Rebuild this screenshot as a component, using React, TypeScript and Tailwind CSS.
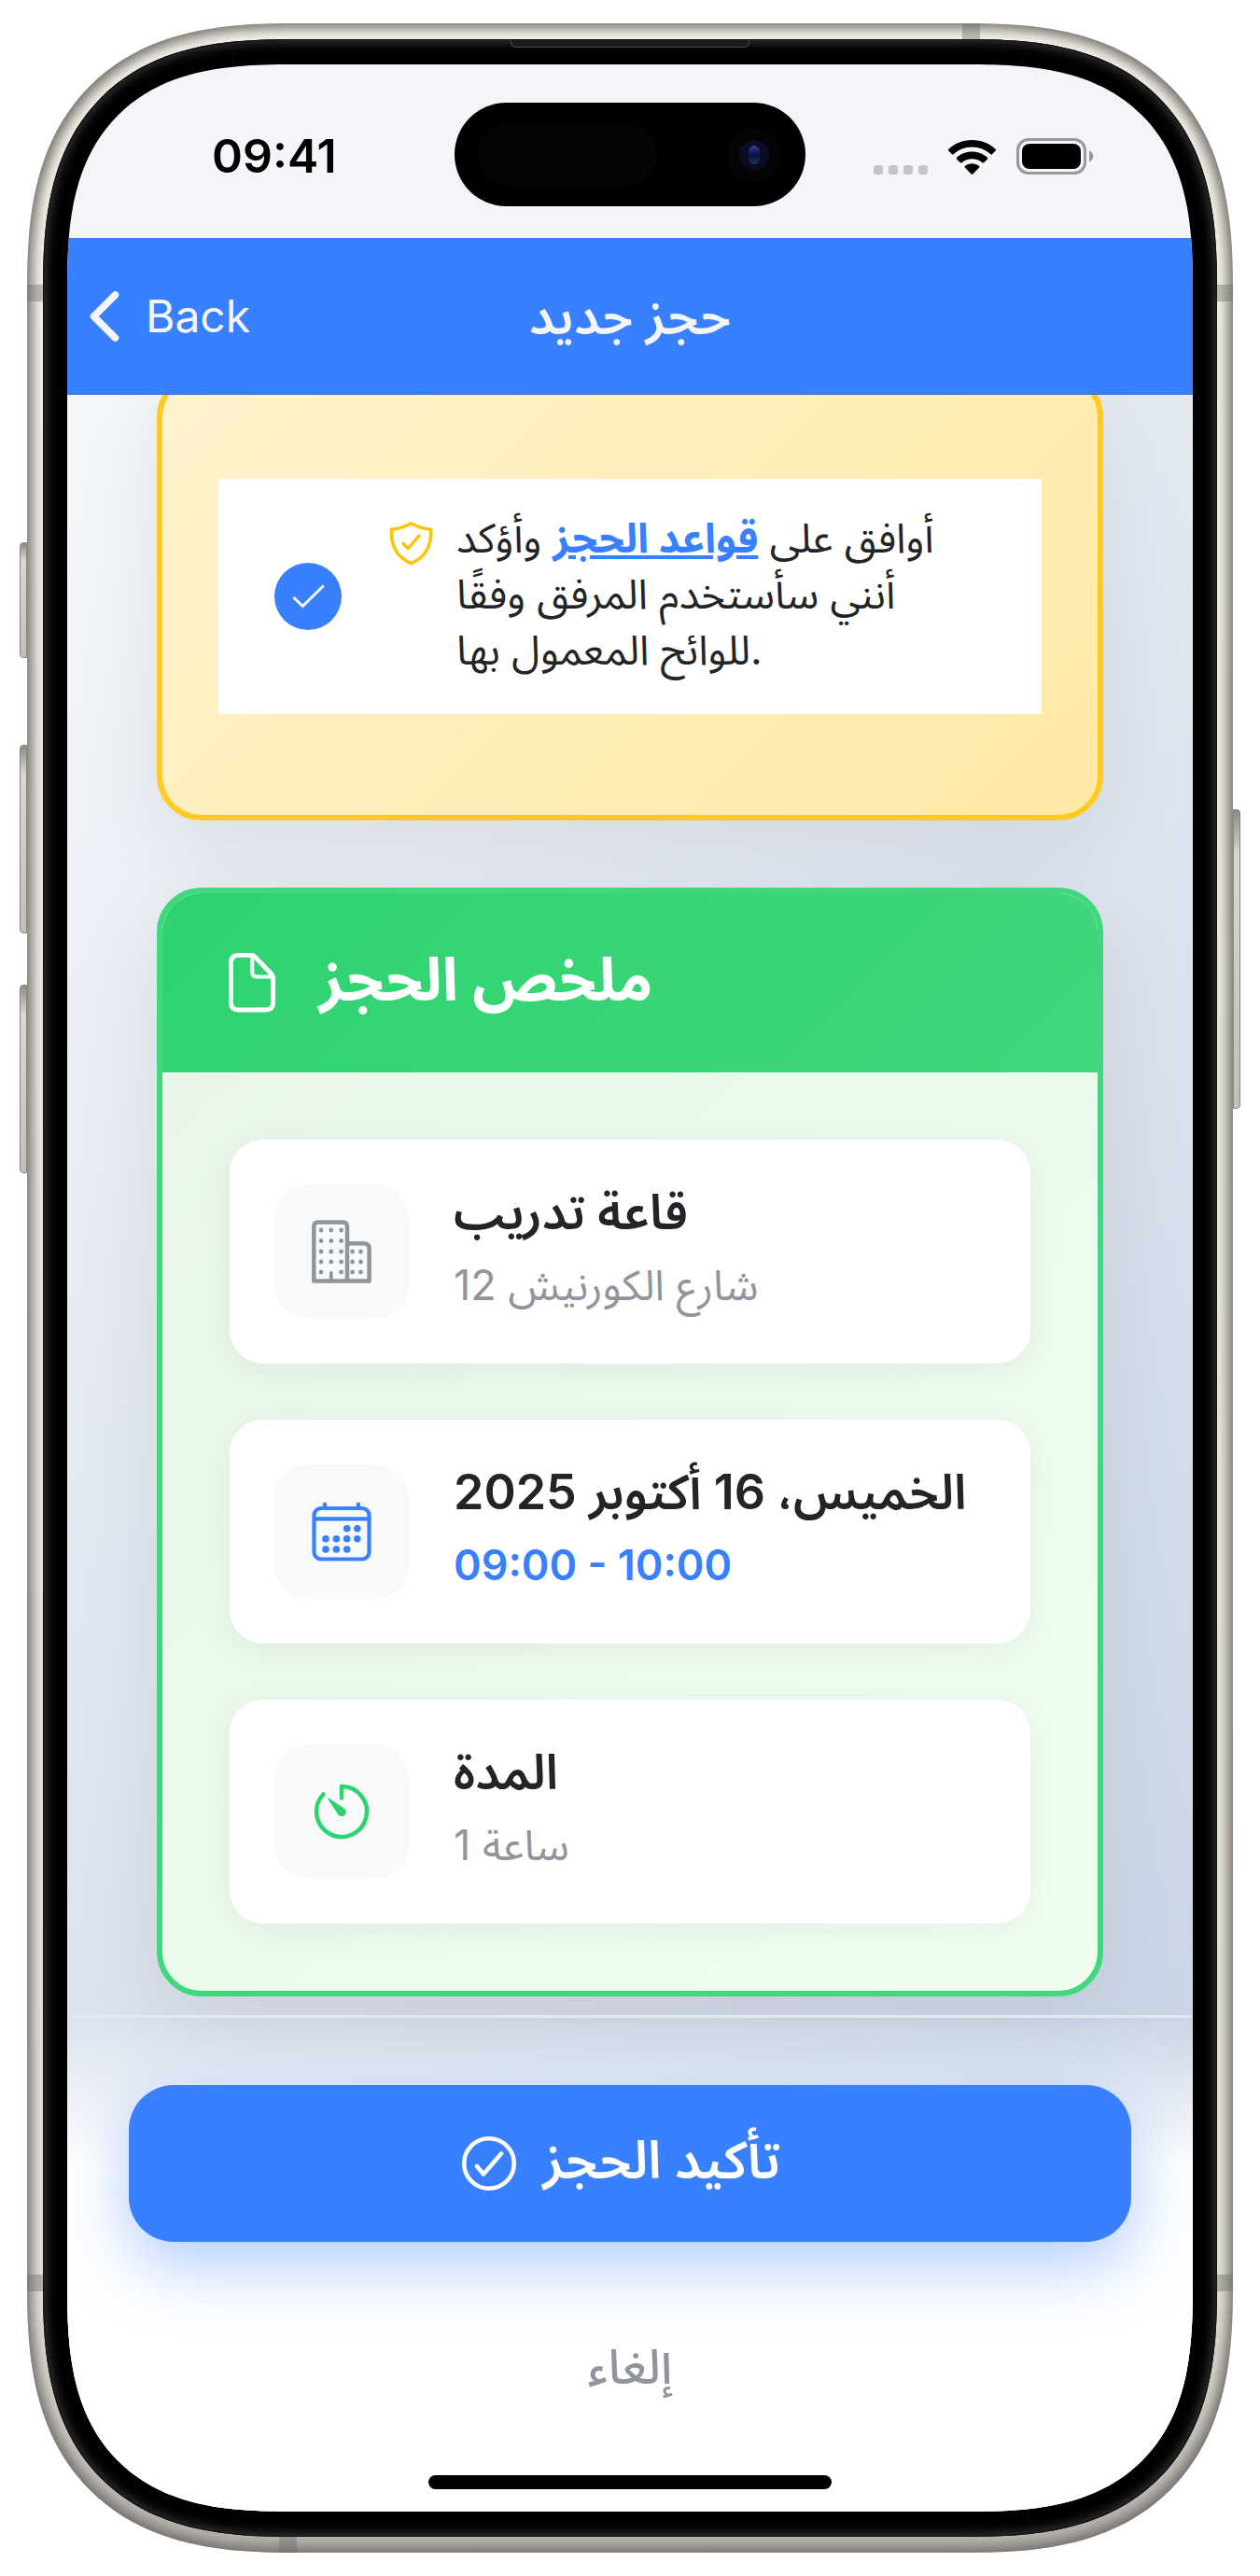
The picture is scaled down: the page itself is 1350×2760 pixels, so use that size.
import type { ReactNode } from "react";

function SignalIcon() {
  return (
    <svg viewBox="0 0 58 10" className="h-[10px] w-[58px] fill-[#c4c5c8]" aria-hidden="true">
      <rect x="0" width="10" height="10" rx="3" />
      <rect x="16" width="10" height="10" rx="3" />
      <rect x="32" width="10" height="10" rx="3" />
      <rect x="48" width="10" height="10" rx="3" />
    </svg>
  );
}

function WifiIcon() {
  return (
    <svg viewBox="0 0 51 37" className="h-[37px] w-[51px]" aria-hidden="true">
      <path d="M25.500 0C35.500 0 44.500 3.900 50.600 9.800C51.100 10.300 51.100 10.900 50.700 11.400L46.900 15.200C46.400 15.700 45.800 15.700 45.300 15.200C40.200 10.400 33.200 7.500 25.500 7.500C17.800 7.500 10.800 10.400 5.700 15.200C5.200 15.700 4.600 15.700 4.100 15.200L.3 11.400C-.1 10.900-.1 10.300.4 9.800C6.500 3.900 15.500 0 25.500 0Z" />
      <path d="M25.500 12.600C32 12.600 37.700 15 41.900 18.800C42.400 19.300 42.400 19.900 42 20.400L38.100 24.200C37.600 24.700 37 24.700 36.500 24.200C33.500 21.700 29.700 20.200 25.500 20.200C21.300 20.200 17.500 21.700 14.500 24.200C14 24.700 13.400 24.700 12.900 24.200L9 20.400C8.600 19.900 8.600 19.300 9.100 18.800C13.300 15 19 12.600 25.500 12.600Z" />
      <path d="M25.500 25.300C28.300 25.300 30.900 26.300 33 27.800C33.500 28.200 33.600 28.900 33.100 29.400L26.400 36.400C25.900 36.900 25.100 36.900 24.600 36.400L17.900 29.400C17.400 28.900 17.500 28.200 18 27.800C20.100 26.300 22.700 25.300 25.500 25.300Z" />
    </svg>
  );
}

function BatteryIcon() {
  return (
    <svg viewBox="0 0 83 39" className="h-[39px] w-[83px]" aria-hidden="true">
      <rect x="1.500" y="1.500" width="72" height="36" rx="11.500" fill="none" stroke="#97989b" strokeWidth="3" />
      <rect x="6" y="6" width="63" height="27" rx="8" />
      <path d="M78 13.500C80.600 14.500 82.200 16.800 82.200 19.500S80.600 24.500 78 25.500Z" fill="#97989b" />
    </svg>
  );
}

function ChevronIcon() {
  return (
    <svg viewBox="0 0 32 54" className="h-[54px] w-8" fill="none" stroke="currentColor" strokeWidth="7.500" strokeLinecap="round" strokeLinejoin="round" aria-hidden="true">
      <path d="M27.500 4L4.500 27L27.500 50" />
    </svg>
  );
}

function ShieldIcon() {
  return (
    <svg viewBox="0 0 48 48" className="size-12 shrink-0 text-[#ffc409]" fill="none" stroke="currentColor" strokeWidth="3.500" strokeLinecap="round" strokeLinejoin="round" aria-hidden="true">
      <path d="M23.500 2.700C17.500 6 9.500 8.500 2.300 9.300C1.800 27 7.500 38.500 23.500 45.800C39.500 38.500 45.200 27 44.700 9.300C37.500 8.500 29.500 6 23.500 2.700Z" />
      <path d="M15 24.300L20.300 29.700L32 16.200" />
    </svg>
  );
}

function DocIcon() {
  return (
    <svg viewBox="0 0 72 72" className="size-[72px]" fill="none" stroke="currentColor" strokeWidth="4.800" strokeLinejoin="round" aria-hidden="true">
      <path d="M13.400 14.500Q13.400 6.500 21.400 6.500H35Q37.500 6.500 39.200 8.200L56.800 26.500Q58.600 28.400 58.600 31V57Q58.600 65 50.600 65H21.400Q13.400 65 13.400 57Z" />
      <path d="M36.300 7V25Q36.300 29.500 40.800 29.500H58" strokeWidth="4" />
    </svg>
  );
}

function BuildingIcon() {
  const rows = [13, 24.5, 36, 47, 58];
  return (
    <svg viewBox="0 0 72 72" className="size-[72px] text-[#92949c]" fill="none" stroke="currentColor" strokeWidth="4.500" aria-hidden="true">
      <path d="M42 67.600V9.500Q42 4.500 37 4.500H11.300Q6.300 4.500 6.300 9.500V67.600H65.600V33Q65.600 27.200 59.800 27.200H42" strokeLinejoin="round" />
      <path d="M24.800 59V68" strokeWidth="3.800" strokeLinecap="round" />
      <g fill="currentColor" stroke="none">
        {rows.map((y) => (
          <g key={y}>
            <circle cx="14" cy={y} r="2.400" />
            {y < 58 && <circle cx="24.800" cy={y} r="2.400" />}
            <circle cx="35.600" cy={y} r="2.400" />
            {y > 30 && <circle cx="47.600" cy={y} r="2.400" />}
            {y > 30 && <circle cx="56.500" cy={y} r="2.400" />}
          </g>
        ))}
      </g>
    </svg>
  );
}

function CalendarIcon() {
  const dots = [
    [41.7, 32.7], [52.8, 32.7],
    [19, 43.8], [30.4, 43.8], [41.7, 43.8], [52.8, 43.8],
    [19, 55], [30.4, 55], [41.7, 55],
  ];
  return (
    <svg viewBox="0 0 72 72" className="size-[72px] text-[#3880ff]" fill="none" stroke="currentColor" strokeWidth="4.200" strokeLinecap="round" aria-hidden="true">
      <rect x="6.500" y="11" width="59" height="54.500" rx="7.500" />
      <path d="M7 22.400H65M18 6.500V10M54 6.500V10" />
      {dots.map(([x, y]) => (
        <circle key={`${x}-${y}`} cx={x} cy={y} r="3.800" fill="currentColor" stroke="none" />
      ))}
    </svg>
  );
}

function TimerIcon() {
  return (
    <svg viewBox="0 0 72 72" className="size-[72px] text-[#2dd36f]" fill="none" stroke="currentColor" strokeWidth="4.500" strokeLinecap="round" strokeLinejoin="round" aria-hidden="true">
      <path d="M36 21.500V9A27 27 0 1 1 16.400 17.500" />
      <path d="M22.400 21.400L38.700 32.400A4.700 4.700 0 1 1 32.200 38.900L21.400 22.700Q21.300 21.100 22.400 21.400Z" fill="currentColor" stroke="none" />
    </svg>
  );
}

function CheckCircleIcon() {
  return (
    <svg viewBox="0 0 60 60" className="size-[60px]" fill="none" stroke="currentColor" strokeWidth="4.500" strokeLinecap="round" strokeLinejoin="round" aria-hidden="true">
      <circle cx="30" cy="30" r="26.800" />
      <path d="M17 33L24 41.500L43 19.500" />
    </svg>
  );
}

function SummaryRow({ icon, title, children }: { icon: ReactNode; title: string; children: ReactNode }) {
  return (
    <li className="flex items-center gap-12 rounded-[36px] bg-white p-12 shadow-[0_6px_36px_rgba(0,0,0,0.06)]">
      <span className="grid size-36 shrink-0 place-items-center rounded-[36px] bg-[#f8f9fb]">{icon}</span>
      <div className="flex min-w-0 flex-col gap-3">
        <h3 className="text-[52px] leading-[60px] font-semibold text-[#222428]">{title}</h3>
        {children}
      </div>
    </li>
  );
}

const sideButton =
  "absolute w-2 border border-[#8b8783] bg-linear-to-b from-[#8f8c88] via-[#d9d7cf] via-15% to-[#c2bfb8]";
const band = "absolute bg-[#6b6966]/40";

export default function App() {
  return (
    <div className="min-h-screen bg-white px-[29px] py-[25px] font-['Inter','Noto_Sans_Arabic','DejaVu_Sans',sans-serif]">
      <div className="relative">
        <span className={`${sideButton} -left-2 top-[556px] h-[124px] rounded-l-sm`} />
        <span className={`${sideButton} -left-2 top-[773px] h-[202px] rounded-l-sm`} />
        <span className={`${sideButton} -left-2 top-[1030px] h-[202px] rounded-l-sm`} />
        <span className={`${sideButton} -right-2 top-[842px] h-[321px] rounded-r-sm`} />

        <div className="relative rounded-[284px] bg-linear-to-b from-[#f6f3e9] via-[#e6e3d9] via-90% to-[#b3b0aa] p-[17px] shadow-[inset_0_0_14px_5px_#6f6b69] [corner-shape:superellipse(1.36)]">
          <span className={`${band} left-0 top-[280px] h-[18px] w-[17px]`} />
          <span className={`${band} right-0 top-[280px] h-[18px] w-[17px]`} />
          <span className={`${band} bottom-[280px] left-0 h-[18px] w-[17px]`} />
          <span className={`${band} right-0 bottom-[280px] h-[18px] w-[17px]`} />
          <span className={`${band} top-0 right-[271px] h-[17px] w-[19px]`} />
          <span className={`${band} bottom-0 left-[270px] h-[17px] w-[19px]`} />

          <div className="relative rounded-[267px] bg-black px-[26px] py-[27px] shadow-[inset_0_0_0_1px_#111,inset_0_0_14px_1px_#4a4a4a] [corner-shape:superellipse(1.38)]">
            <span className="absolute top-px left-1/2 h-2 w-64 -translate-x-1/2 rounded-b-md border border-t-0 border-[#4a4a4a] bg-[#1b1b1b]" />

            <div className="relative flex flex-col overflow-hidden rounded-[240px] bg-[#f4f5f9] [corner-shape:superellipse(1.43)]">
              <div className="relative flex h-[186px] items-center justify-between pt-2.5 pr-[106px] pl-[155px]">
                <time className="text-[50px] leading-[60px] font-semibold text-black">09:41</time>
                <div className="absolute top-[41px] left-1/2 flex h-[111px] w-[376px] -translate-x-1/2 items-center justify-between rounded-full bg-black pr-[26px] pl-6">
                  <span className="h-[66px] w-[193px] rounded-full bg-[#040404]" />
                  <span className="grid size-[58px] place-items-center rounded-full bg-[#070408]">
                    <span className="grid size-8 place-items-center rounded-full bg-[#0b0c24]">
                      <span className="h-5 w-3 rounded-full bg-linear-to-b from-[#3a3f96] via-[#0c0d4a] to-[#1c3350]" />
                    </span>
                  </span>
                </div>
                <div className="flex items-end gap-[22px]">
                  <SignalIcon />
                  <WifiIcon />
                  <BatteryIcon />
                </div>
              </div>

              <header className="relative z-10 grid h-[168px] grid-cols-[1fr_auto_1fr] items-center border-b border-[#3470df] bg-[#3880ff] px-6 text-[#f4f5f9]">
                <button type="button" className="flex items-center gap-7 justify-self-start text-[48px] leading-[60px]">
                  <ChevronIcon />
                  Back
                </button>
                <h1 className="text-[54px] leading-[72px] font-semibold">حجز جديد</h1>
              </header>

              <div className="bg-linear-[135deg] from-[#f5f7fa] to-[#c3cfe2]">
                <main className="flex flex-col gap-[72px] px-24 pb-5">
                  <section className="-mt-6 rounded-[48px] border-[6px] border-[#ffca22] bg-linear-[135deg] from-[#fff3cd] to-[#ffe9a6] px-[60px] py-[108px] shadow-[0_24px_96px_rgba(0,0,0,0.08)]">
                    <label className="flex items-center gap-[51px] bg-white py-[33px] pr-9 pl-[60px]">
                      <span className="grid size-[72px] shrink-0">
                        <input type="checkbox" defaultChecked className="col-start-1 row-start-1 size-[72px] appearance-none rounded-full bg-[#3880ff]" />
                        <svg viewBox="0 0 72 72" className="pointer-events-none col-start-1 row-start-1 size-[72px]" fill="none" stroke="#fff" strokeWidth="2.800" aria-hidden="true">
                          <path d="M20.500 37L30.300 46.500L52.700 24.500" />
                        </svg>
                      </span>
                      <span className="flex items-start gap-6 pb-1.5">
                        <span className="pt-3">
                          <ShieldIcon />
                        </span>
                        <span className="max-w-[540px] text-[44px] leading-[60px] text-[#222428]">
                          أوافق على{" "}
                          <a href="#rules" className="font-bold text-[#3880ff] underline">
                            قواعد الحجز
                          </a>{" "}
                          وأؤكد أنني سأستخدم المرفق وفقًا للوائح المعمول بها.
                        </span>
                      </span>
                    </label>
                  </section>

                  <section className="overflow-hidden rounded-[48px] border-[6px] border-[#42d77d] bg-linear-[135deg] from-[#e8f5e8] to-[#f0fff0] shadow-[0_24px_96px_rgba(0,0,0,0.08)]">
                    <div className="flex h-48 items-center gap-9 bg-linear-[135deg] from-[#2dd36f] to-[#42d77d] px-[60px] text-white">
                      <DocIcon />
                      <h2 className="pb-2 text-[64px] leading-[84px] font-bold">ملخص الحجز</h2>
                    </div>
                    <ul className="flex flex-col gap-[60px] p-[72px]">
                      <SummaryRow icon={<BuildingIcon />} title="قاعة تدريب">
                        <p className="text-[45px] leading-[72px] text-[#92949c]">شارع الكورنيش 12</p>
                      </SummaryRow>
                      <SummaryRow icon={<CalendarIcon />} title="الخميس، 16 أكتوبر 2025">
                        <p className="text-[45px] leading-[72px] font-semibold text-[#3880ff]">09:00 - 10:00</p>
                      </SummaryRow>
                      <SummaryRow icon={<TimerIcon />} title="المدة">
                        <p className="text-[45px] leading-[72px] text-[#92949c]">1 ساعة</p>
                      </SummaryRow>
                    </ul>
                  </section>
                </main>

                <footer className="relative flex flex-col items-center border-t-[3px] border-[#e4e7ec] bg-linear-to-t from-white from-70% to-transparent px-[66px] pt-[72px]">
                  <button type="button" className="flex h-[168px] w-full items-center justify-center gap-7 rounded-[48px] bg-[#3880ff] pr-5 text-[56px] leading-[72px] font-semibold text-white shadow-[0_24px_72px_rgba(56,128,255,0.4)]">
                    <CheckCircleIcon />
                    <span className="pb-2">تأكيد الحجز</span>
                  </button>
                  <button type="button" className="mt-[66px] h-36 w-full pb-2 text-[51px] leading-[72px] font-medium text-[#92949c]">
                    إلغاء
                  </button>
                  <span className="mt-10 mb-6 h-[15px] w-[432px] rounded-full bg-black" />
                </footer>
              </div>
            </div>
          </div>
        </div>
      </div>
    </div>
  );
}
